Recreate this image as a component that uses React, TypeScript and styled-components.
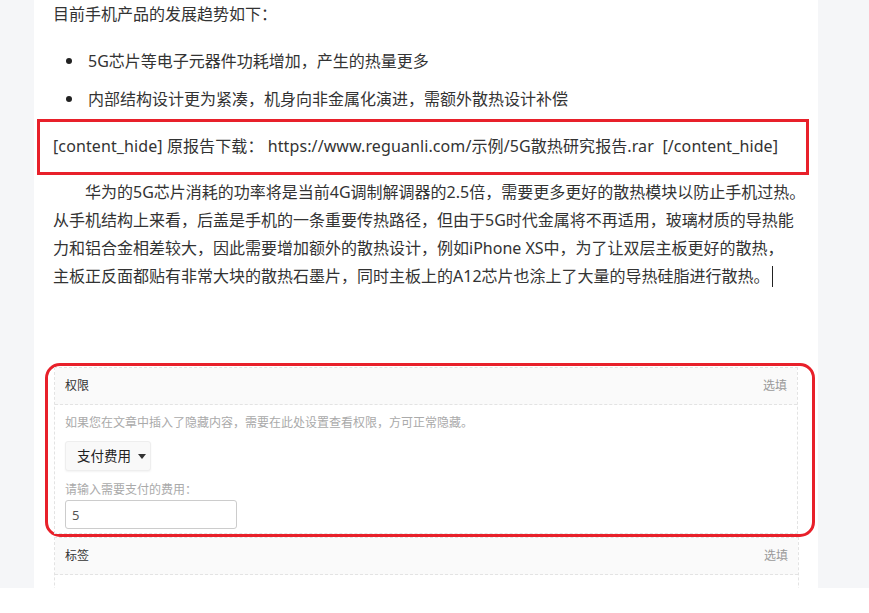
import React from 'react'
import styled, { createGlobalStyle } from 'styled-components'

const GlobalStyle = createGlobalStyle`
  html, body {
    margin: 0;
    padding: 0;
    background: #fff;
  }
  * {
    box-sizing: border-box;
  }
`

const Page = styled.div`
  height: 588px;
  overflow: hidden;
  background: #f5f6f8;
  padding-left: 34px;
  font-family: "Noto Sans", "Noto Sans CJK SC", sans-serif;
`

const Column = styled.div`
  width: 784px;
  height: 100%;
  background: #fff;
  padding: 0 14px 0 19px;
  color: #333;
  font-size: 16px;
  line-height: 28px;
`

const Intro = styled.p`
  margin: 0;
`

const List = styled.ul`
  list-style: none;
  margin: 19px 0 0;
  padding: 0;
`

const Item = styled.li`
  position: relative;
  padding-left: 35px;
  margin-bottom: 10px;

  &::before {
    content: '';
    position: absolute;
    left: 13px;
    top: 11px;
    width: 6px;
    height: 6px;
    border-radius: 50%;
    background: #222;
  }
`

const Marked = styled.div`
  margin: -4px -5px 0 -16px;
  border: 3px solid #e8202a;
  padding: 10px 13px 12px;
  white-space: pre;
  letter-spacing: 0.1px;
`

const Body = styled.p`
  margin: 3px 0 0;
  text-indent: 32px;
  white-space: nowrap;
`

const Caret = styled.span`
  display: inline-block;
  width: 1px;
  height: 21px;
  margin-left: 2px;
  vertical-align: -5px;
  background: #222;
`

const Highlight = styled.div`
  margin: 73px -11px 0 -8px;
  border: 3px solid #e8202a;
  border-radius: 15px;
  padding: 1px 14px 0 6px;
`

const Panel = styled.div<{ $shift?: boolean }>`
  border: 1px dashed #e3e3e3;
  ${({ $shift }) => ($shift ? 'margin: 0 5px 0 1px;' : '')}
  background: #fff;
  font-size: 12px;
  line-height: 18px;
`

const PanelHead = styled.div`
  height: 37px;
  display: flex;
  align-items: center;
  justify-content: space-between;
  padding: 0 10px;
  background: #fafafa;
  border-bottom: 1px dashed #e3e3e3;
  color: #333;
`

const Optional = styled.span`
  color: #999;
`

const PanelBody = styled.div`
  padding: 9px 10px 4px;
  display: flex;
  flex-direction: column;
  align-items: flex-start;
`

const Hint = styled.div`
  color: #aaa;
`

const Select = styled.div`
  margin-top: 9px;
  height: 30px;
  width: 86px;
  display: flex;
  align-items: center;
  gap: 7px;
  padding: 0 0 0 11px;
  background: #f9f9f9;
  border: 1px solid #eee;
  border-radius: 3px;
  box-shadow: 0 1px 2px rgba(0, 0, 0, 0.05);
  color: #222;
  font-size: 13.5px;
`

const Arrow = styled.span`
  width: 0;
  height: 0;
  border-left: 4px solid transparent;
  border-right: 4px solid transparent;
  border-top: 5px solid #333;
`

const Label = styled.div`
  margin-top: 10px;
  color: #aaa;
`

const Input = styled.input`
  margin-top: 1px;
  width: 172px;
  height: 29px;
  border: 1px solid #ccc;
  border-radius: 3px;
  padding: 0 6px;
  font-family: inherit;
  font-size: 13px;
  color: #555;
  outline: none;
`

export default function App() {
  return (
    <>
      <GlobalStyle />
      <Page>
        <Column>
          <Intro>目前手机产品的发展趋势如下：</Intro>
          <List>
            <Item>5G芯片等电子元器件功耗增加，产生的热量更多</Item>
            <Item>内部结构设计更为紧凑，机身向非金属化演进，需额外散热设计补偿</Item>
          </List>
          <Marked>{'[content_hide] 原报告下载： https://www.reguanli.com/示例/5G散热研究报告.rar  [/content_hide]'}</Marked>
          <Body>
            华为的5G芯片消耗的功率将是当前4G调制解调器的2.5倍，需要更多更好的散热模块以防止手机过热。
            <br />
            从手机结构上来看，后盖是手机的一条重要传热路径，但由于5G时代金属将不再适用，玻璃材质的导热能
            <br />
            力和铝合金相差较大，因此需要增加额外的散热设计，例如iPhone XS中，为了让双层主板更好的散热，
            <br />
            主板正反面都贴有非常大块的散热石墨片，同时主板上的A12芯片也涂上了大量的导热硅脂进行散热。
            <Caret />
          </Body>
          <Highlight>
            <Panel>
              <PanelHead>
                <span>权限</span>
                <Optional>选填</Optional>
              </PanelHead>
              <PanelBody>
                <Hint>如果您在文章中插入了隐藏内容，需要在此处设置查看权限，方可正常隐藏。</Hint>
                <Select>
                  支付费用
                  <Arrow />
                </Select>
                <Label>请输入需要支付的费用：</Label>
                <Input defaultValue="5" />
              </PanelBody>
            </Panel>
          </Highlight>
          <Panel $shift>
            <PanelHead>
              <span>标签</span>
              <Optional>选填</Optional>
            </PanelHead>
            <PanelBody style={{ height: 60 }} />
          </Panel>
        </Column>
      </Page>
    </>
  )
}
